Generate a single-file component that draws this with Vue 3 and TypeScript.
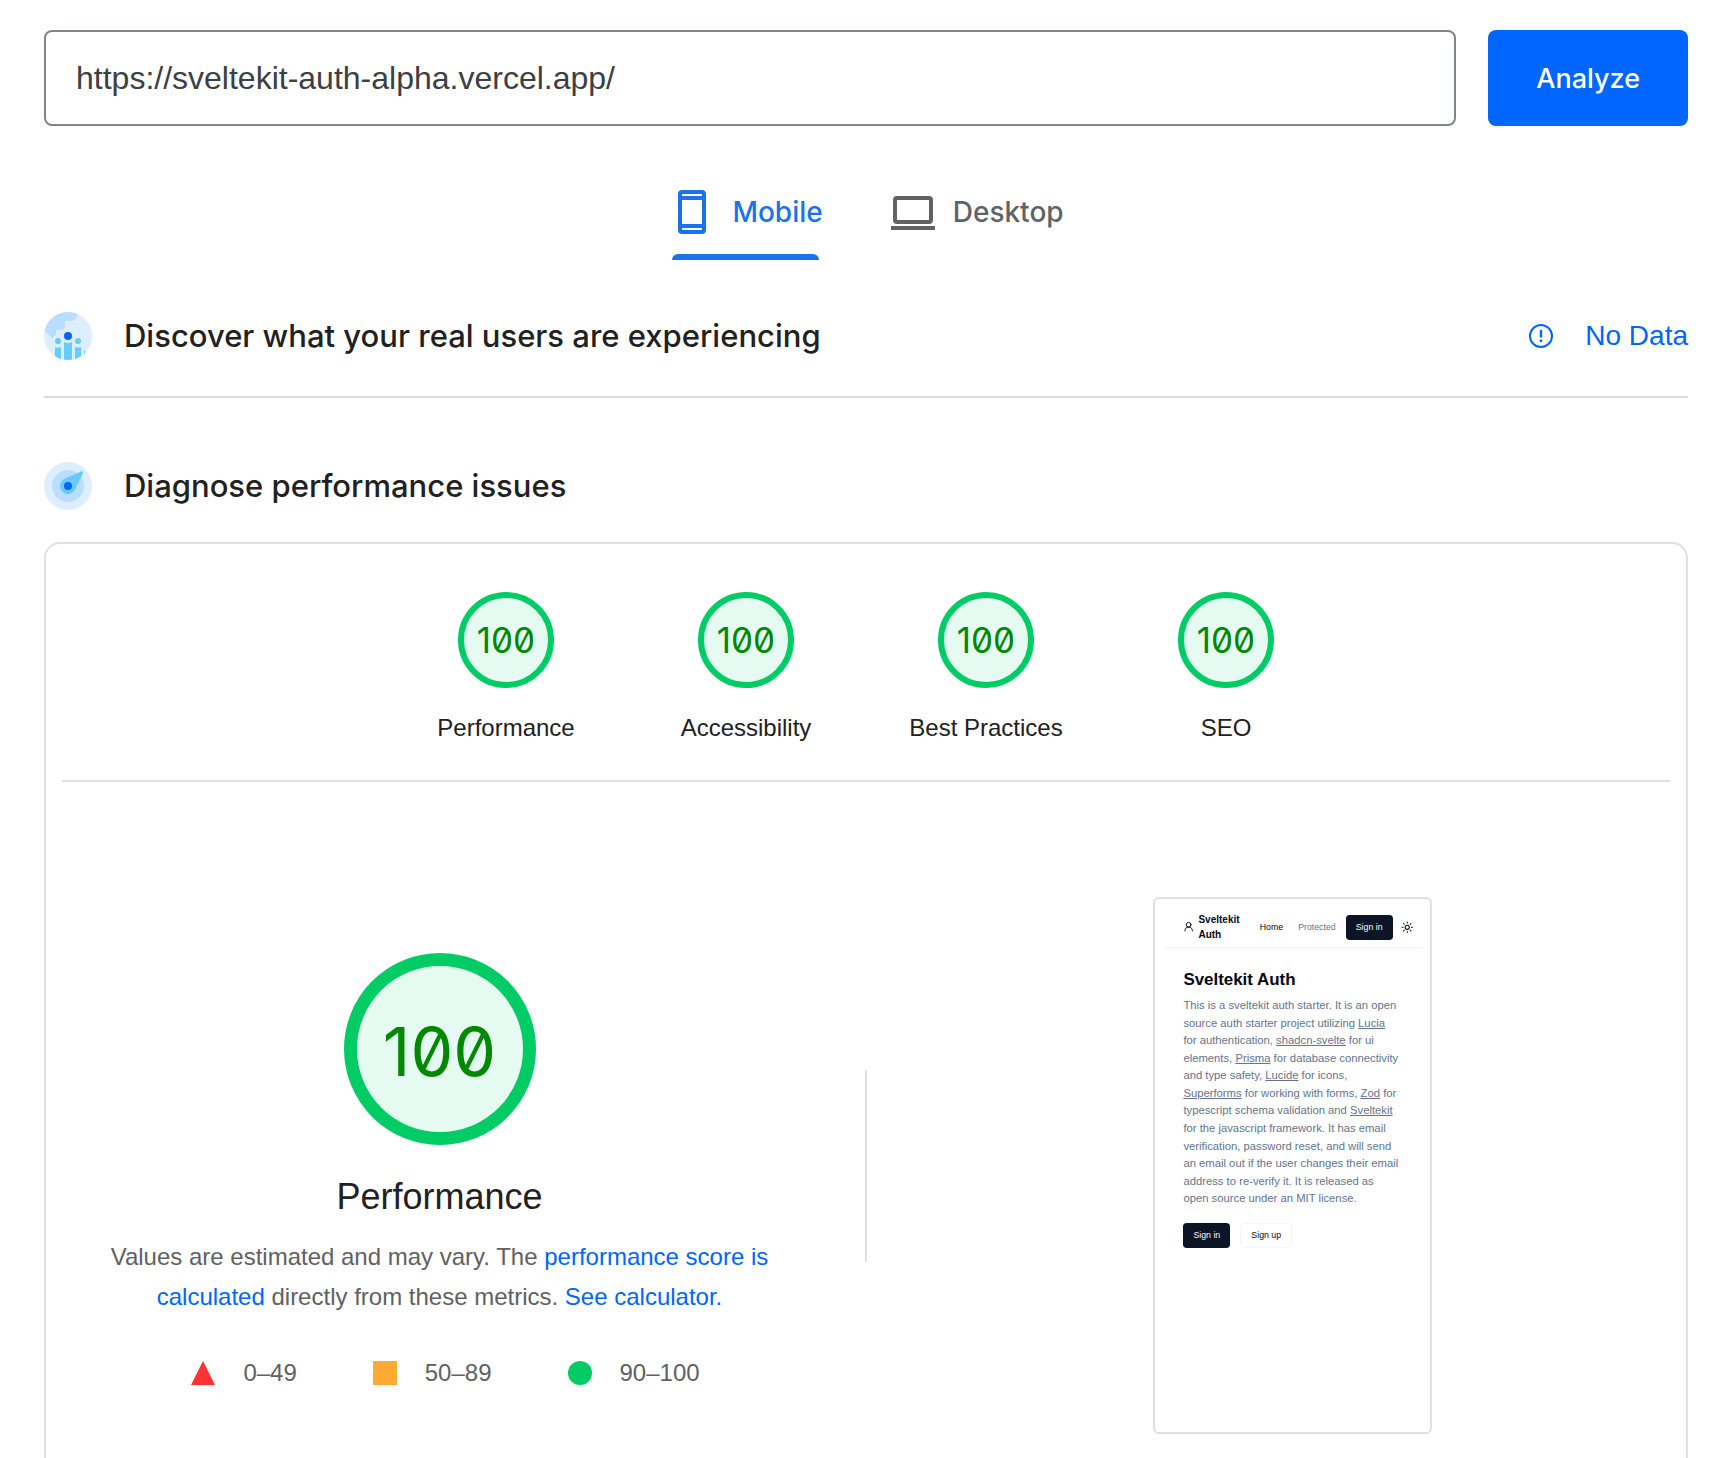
<script setup lang="ts">
import { ref } from 'vue'

type Device = 'mobile' | 'desktop'

interface Category {
  name: string
  score: number
}

const url = ref('https://sveltekit-auth-alpha.vercel.app/')
const device = ref<Device>('mobile')

const categories: Category[] = [
  { name: 'Performance', score: 100 },
  { name: 'Accessibility', score: 100 },
  { name: 'Best Practices', score: 100 },
  { name: 'SEO', score: 100 },
]
</script>

<template>
  <main class="page">
    <form class="search" @submit.prevent>
      <input v-model="url" class="url" type="text" name="url" aria-label="Web page URL" />
      <button class="analyze" type="submit">Analyze</button>
    </form>

    <div class="tabs" role="tablist">
      <button
        class="tab"
        :class="{ active: device === 'mobile' }"
        type="button"
        role="tab"
        :aria-selected="device === 'mobile'"
        @click="device = 'mobile'"
      >
        <svg class="tab-icon" viewBox="0 0 48 48" aria-hidden="true">
          <path
            fill="currentColor"
            fill-rule="evenodd"
            d="M14 2h20a4 4 0 0 1 4 4v36a4 4 0 0 1-4 4H14a4 4 0 0 1-4-4V6a4 4 0 0 1 4-4zM14 6v2h20V6zM14 12v24h20V12zM14 40v2h20v-2z"
          />
        </svg>
        Mobile
      </button>
      <button
        class="tab"
        :class="{ active: device === 'desktop' }"
        type="button"
        role="tab"
        :aria-selected="device === 'desktop'"
        @click="device = 'desktop'"
      >
        <svg class="tab-icon" viewBox="0 0 48 48" aria-hidden="true">
          <path
            fill="currentColor"
            fill-rule="evenodd"
            d="M8 8h32a4 4 0 0 1 4 4v20a4 4 0 0 1-4 4H8a4 4 0 0 1-4-4V12a4 4 0 0 1 4-4zM8 12v20h32V12zM2 38h44v4H2z"
          />
        </svg>
        Desktop
      </button>
    </div>

    <section class="section field">
      <svg class="section-icon" viewBox="0 0 48 48" aria-hidden="true">
        <clipPath id="disc"><circle cx="24" cy="24" r="24" /></clipPath>
        <g clip-path="url(#disc)">
          <rect width="48" height="48" fill="#def" />
          <path fill="#bdf" d="M0 0h33v3a6 6 0 0 1-6 6h-6v5a4 4 0 0 1-4 4h-5v5l-4 3-8-8z" />
          <path fill="#6cf" d="M11 35q3 1 6 0v13h-6zM20 30q4 2 8 0v18h-8zM31 35q3 1 6 0v13h-6zM40 39l1-1v4h-1z" />
          <circle cx="14" cy="29" r="3" fill="#6cf" />
          <circle cx="34" cy="29" r="3" fill="#6cf" />
          <circle cx="24" cy="24" r="4" fill="#06f" />
        </g>
      </svg>
      <h2>Discover what your real users are experiencing</h2>
      <div class="no-data">
        <svg class="info-icon" viewBox="0 0 24 24" aria-hidden="true">
          <circle cx="12" cy="12" r="11" fill="none" stroke="currentColor" stroke-width="2" />
          <path fill="currentColor" d="M10.8 6h2.4v7.4h-2.4zM10.8 15.6h2.4v2.4h-2.4z" />
        </svg>
        No Data
      </div>
    </section>

    <section class="section lab">
      <svg class="section-icon" viewBox="0 0 48 48" aria-hidden="true">
        <circle cx="24" cy="24" r="24" fill="#def" />
        <circle cx="24" cy="24" r="16" fill="#bdf" />
        <path fill="#6cf" d="M37 9.4a1.4 1.4 0 0 1 2 1.8L31.4 27A8 8 0 1 1 20.5 16.8z" />
        <circle cx="24" cy="24" r="4" fill="#06f" />
      </svg>
      <h2>Diagnose performance issues</h2>
    </section>

    <div class="card">
      <div class="gauges">
        <div v-for="c in categories" :key="c.name" class="gauge-item">
          <div class="gauge">{{ c.score }}</div>
          <div class="gauge-label">{{ c.name }}</div>
        </div>
      </div>

      <div class="detail">
        <div class="summary">
          <div class="gauge large">100</div>
          <h3>Performance</h3>
          <p class="desc">
            Values are estimated and may vary. The
            <a href="#score">performance score is calculated</a> directly from these metrics.
            <a href="#calculator">See calculator.</a>
          </p>
          <div class="legend">
            <span class="range">
              <svg viewBox="0 0 24 24" aria-hidden="true"><path d="M12 0l12 24H0z" fill="#f33" /></svg>0–49
            </span>
            <span class="range">
              <svg viewBox="0 0 24 24" aria-hidden="true"><path d="M0 0h24v24H0z" fill="#fa3" /></svg>50–89
            </span>
            <span class="range">
              <svg viewBox="0 0 24 24" aria-hidden="true"><circle cx="12" cy="12" r="12" fill="#0c6" /></svg>90–100
            </span>
          </div>
        </div>

        <div class="rule"></div>

        <div class="preview">
          <div class="frame">
            <div class="shot">
              <header class="shot-header">
                <svg class="user" viewBox="0 0 24 24" aria-hidden="true">
                  <circle cx="12" cy="8" r="5" />
                  <path d="M20 21a8 8 0 0 0-16 0" />
                </svg>
                <strong>Sveltekit<br />Auth</strong>
                <a class="nav home" href="#home">Home</a>
                <a class="nav" href="#protected">Protected</a>
                <button class="btn dark" type="button">Sign in</button>
                <svg class="sun" viewBox="0 0 24 24" aria-hidden="true">
                  <circle cx="12" cy="12" r="4" />
                  <path
                    d="M12 2v2M12 20v2M4.93 4.93l1.41 1.41M17.66 17.66l1.41 1.41M2 12h2M20 12h2M6.34 17.66l-1.41 1.41M19.07 4.93l-1.41 1.41"
                  />
                </svg>
              </header>
              <div class="shot-body">
                <h1>Sveltekit Auth</h1>
                <p>
                  This is a sveltekit auth starter. It is an open source auth starter project utilizing
                  <a href="#lucia">Lucia</a> for authentication, <a href="#shadcn">shadcn-svelte</a> for ui
                  elements, <a href="#prisma">Prisma</a> for database connectivity and type safety,
                  <a href="#lucide">Lucide</a> for icons, <a href="#superforms">Superforms</a> for working with
                  forms, <a href="#zod">Zod</a> for typescript schema validation and
                  <a href="#sveltekit">Sveltekit</a> for the javascript framework. It has email verification,
                  password reset, and will send an email out if the user changes their email address to
                  re-verify it. It is released as open source under an MIT license.
                </p>
                <div class="shot-actions">
                  <button class="btn dark" type="button">Sign in</button>
                  <button class="btn" type="button">Sign up</button>
                </div>
              </div>
            </div>
          </div>
        </div>
      </div>
    </div>
  </main>
</template>

<style>
body {
  margin: 0;
  background: #fff;
}
</style>

<style scoped>
.page {
  box-sizing: border-box;
  min-height: 100vh;
  padding: 30px 30px 0 44px;
  display: flex;
  flex-direction: column;
  font-family: "Liberation Sans", Arial, sans-serif;
  color: #212121;
}

button,
input {
  font-family: inherit;
  margin: 0;
}

a {
  color: #06f;
  text-decoration: none;
}

/* URL form */
.search {
  display: flex;
  gap: 32px;
}

.url {
  box-sizing: border-box;
  flex: 1;
  min-width: 0;
  height: 96px;
  padding: 0 30px;
  border: 2px solid #80868b;
  border-radius: 8px;
  background: #fff;
  color: #3c4043;
  font-size: 32px;
  outline: none;
}

.analyze {
  height: 96px;
  padding: 0 48px;
  border: 0;
  border-radius: 8px;
  background: #06f;
  color: #fff;
  font-family: Inter, sans-serif;
  font-size: 27px;
  font-weight: 500;
}

/* Device tabs */
.tabs {
  display: flex;
  justify-content: center;
  gap: 66px;
  margin-top: 62px;
}

.tab {
  position: relative;
  display: flex;
  align-items: center;
  gap: 16px;
  padding: 0 0 24px;
  border: 0;
  background: none;
  color: #5f6368;
  font-family: Inter, sans-serif;
  font-size: 28px;
  font-weight: 500;
}

.tab.active {
  color: #1a73e8;
}

.tab.active::after {
  content: "";
  position: absolute;
  left: 4px;
  right: 4px;
  bottom: 0;
  height: 6px;
  border-radius: 6px 6px 0 0;
  background: #1a73e8;
}

.tab-icon,
.section-icon {
  width: 48px;
  height: 48px;
  flex: none;
}

/* Section headings */
.section {
  display: flex;
  align-items: center;
  gap: 32px;
}

.section h2 {
  margin: 0;
  font-family: Inter, sans-serif;
  font-size: 31px;
  line-height: 46px;
  font-weight: 500;
}

.field {
  margin-top: 52px;
  padding-bottom: 36px;
  border-bottom: 2px solid #dadce0;
}

.lab {
  margin-top: 64px;
}

.no-data {
  display: flex;
  align-items: center;
  gap: 32px;
  margin-left: auto;
  color: #06f;
  font-size: 28px;
}

.info-icon {
  width: 24px;
  height: 24px;
}

/* Report card */
.card {
  flex: 1;
  margin-top: 32px;
  padding: 0 16px;
  border: 2px solid #e0e0e0;
  border-bottom: 0;
  border-radius: 16px 16px 0 0;
}

.gauges {
  display: flex;
  justify-content: center;
  padding: 48px 0 36px;
  border-bottom: 2px solid #e0e0e0;
}

.gauge-item {
  width: 240px;
  display: flex;
  flex-direction: column;
  align-items: center;
  gap: 24px;
}

.gauge {
  box-sizing: border-box;
  width: 96px;
  height: 96px;
  display: flex;
  align-items: center;
  justify-content: center;
  border: 6px solid #0c6;
  border-radius: 50%;
  background: #e5faf0;
  background-clip: padding-box;
  color: #080;
  font-family: Inter, sans-serif;
  font-size: 35px;
  font-feature-settings: "zero";
}

.gauge-label {
  font-size: 24px;
  line-height: 32px;
}

.gauge.large {
  width: 192px;
  height: 192px;
  padding-top: 4px;
  border-width: 13px;
  font-size: 68px;
}

.detail {
  display: grid;
  grid-template-columns: 1fr 2px 1fr;
  gap: 48px;
  align-items: center;
  padding: 115px 0 23px;
}

.summary {
  display: flex;
  flex-direction: column;
  align-items: center;
  padding-top: 10px;
}

.summary h3 {
  margin: 28px 0 16px;
  font-size: 36px;
  line-height: 48px;
  font-weight: 400;
}

.desc {
  margin: 0;
  padding: 0 16px;
  color: #616161;
  font-size: 24px;
  line-height: 40px;
  text-align: center;
}

.legend {
  display: flex;
  gap: 76px;
  margin-top: 40px;
  padding-left: 12px;
  color: #616161;
  font-size: 24px;
  line-height: 32px;
}

.range {
  display: flex;
  align-items: center;
  gap: 28px;
}

.range svg {
  width: 24px;
  height: 24px;
}

.rule {
  height: 192px;
  background: #e0e0e0;
}

.preview {
  display: flex;
  justify-content: center;
}

.frame {
  padding: 8px;
  border: 2px solid #e0e0e0;
  border-radius: 6px;
}

/* The captured page keeps its mobile metrics and is shown reduced */
.shot {
  zoom: 0.627;
  width: 412px;
  height: 825px;
  overflow: hidden;
  color: #020817;
}

.shot-header {
  display: flex;
  align-items: center;
  height: 64px;
  padding-left: 31px;
  border-bottom: 1px solid #f1f5f9;
}

.shot-header strong {
  margin: 0 32px 0 7px;
  font-size: 16px;
  line-height: 24px;
}

.user,
.sun {
  flex: none;
  fill: none;
  stroke: currentColor;
  stroke-width: 2;
  stroke-linecap: round;
}

.user {
  width: 18px;
  height: 18px;
}

.sun {
  width: 20px;
  height: 20px;
  margin-left: 14px;
}

.nav {
  margin-right: 16px;
  color: #64748b;
  font-size: 14px;
}

.nav.home {
  margin-right: 24px;
  color: #020817;
}

.btn {
  flex: none;
  box-sizing: border-box;
  height: 40px;
  padding: 0 16px;
  border: 1px solid #f1f5f9;
  border-radius: 6px;
  background: #fff;
  color: #020817;
  font-size: 14px;
}

.btn.dark {
  border: 0;
  background: #0b1526;
  color: #f8fafc;
}

.shot-body {
  padding: 32px 36px 0 32px;
}

.shot-body h1 {
  margin: 0 0 8px;
  font-size: 27px;
  line-height: 38px;
}

.shot-body p {
  margin: 0;
  color: #64748b;
  font-size: 18px;
  line-height: 28px;
}

.shot-body p a {
  color: inherit;
  text-decoration: underline;
}

.shot-actions {
  display: flex;
  gap: 16px;
  margin-top: 24px;
}
</style>
